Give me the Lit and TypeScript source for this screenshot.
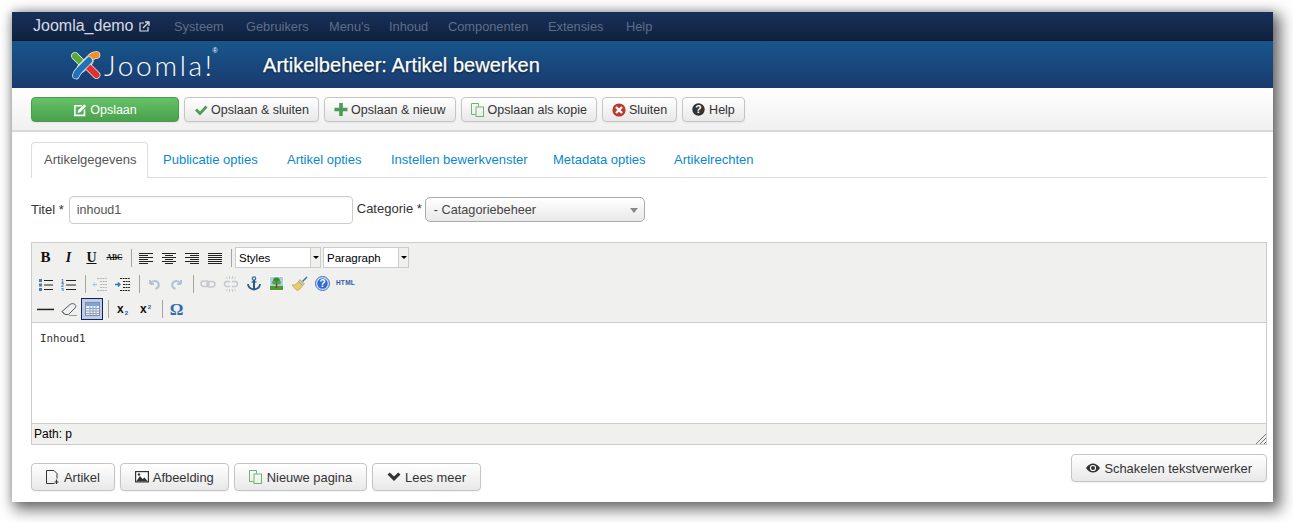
import { LitElement, html, css, svg } from "lit";
import { customElement } from "lit/decorators.js";

const ic = (w: number, h: number, body: unknown) =>
  html`<svg class="ic" width=${w} height=${h} viewBox="0 0 ${w} ${h}">${body}</svg>`;

const icons: Record<string, unknown> = {
  edit: ic(14, 14, svg`<path d="M1 2h8.500L8 3.600H2.700v8h8V7.300L12.300 5.700V13.200H1z" fill="#fff"/><path d="M5.200 7.300L11.200 1.300l2 2-6 6-2.600.6z" fill="#fff"/>`),
  check: ic(14, 14, svg`<path d="M1 7.500l2-2 3 3 5.500-6 2 2L6 12.500z" fill="#4c9b58"/>`),
  plus: ic(14, 13, svg`<path d="M5.200 0h3.600v4.700H13.500v3.600H8.800V13H5.200V8.300H.5V4.700h4.700z" fill="#4c9b58"/>`),
  copy: ic(14, 14, svg`<path d="M.5.500h7v3M4.500 11.500h-4V.5" fill="none" stroke="#6cb56c"/><rect x="5" y="4" width="7.500" height="9.500" fill="none" stroke="#6cb56c"/>`),
  close: ic(14, 14, svg`<circle cx="7" cy="7" r="6.600" fill="#bd362f"/><path d="M4 4l6 6M10 4l-6 6" stroke="#fff" stroke-width="2.400"/>`),
  help: ic(14, 13, svg`<circle cx="6.500" cy="6.500" r="6.200" fill="#333"/><text x="6.500" y="10.200" font-family="Liberation Sans" font-weight="700" font-size="10.500" text-anchor="middle" fill="#fff">?</text>`),
  file: ic(14, 15, svg`<path d="M8.500 13.500H.5V.5H8l3 3V8.500" fill="none" stroke="#333"/><path d="M10.500 9.500v4.500M8.500 12h4" stroke="#333" stroke-width="1.200"/>`),
  picture: ic(14, 12, svg`<path d="M0 0h14v11.500H0z" fill="#333"/><path d="M1.200 1.200h11.600v9H1.200z" fill="#fff"/><path d="M1.500 10l3.500-5 2.500 3 2-1.500 3 3.500z" fill="#333"/><circle cx="4" cy="3.500" r="1.200" fill="#333"/>`),
  chevron: ic(14, 10, svg`<path d="M.5 2.600L2.800.4l4.200 4 4.200-4 2.300 2.200L7 9z" fill="#333"/>`),
  eye: ic(14, 10, svg`<path d="M0 5c2-3 4.500-4.600 7-4.600S12 2 14 5c-2 3-4.500 4.600-7 4.600S2 8 0 5z" fill="#333"/><circle cx="7" cy="5" r="3.100" fill="#fff"/><circle cx="7" cy="5" r="2" fill="#333"/>`),
  ext: ic(11, 11, svg`<path d="M5 2H1v8h8V6" fill="none" stroke="#d5dbe4" stroke-width="1.200"/><path d="M4 7l5.500-5.500M6 1h4v4" fill="none" stroke="#d5dbe4" stroke-width="1.300"/>`),
};

const lines = (rows: [number, number][]) =>
  rows.map(([a, b], i) => svg`<rect x=${a} y=${2 + i * 2} width=${b - a} height="1" fill="#222"/>`);

const mce: Record<string, unknown> = {
  bold: html`<span class="glyph b">B</span>`,
  italic: html`<span class="glyph i">I</span>`,
  under: html`<span class="glyph u">U</span>`,
  strike: html`<span class="glyph s">ABC</span>`,
  left: ic(14, 14, lines([[0, 14], [0, 9], [0, 14], [0, 9], [0, 14], [0, 9]])),
  center: ic(14, 14, lines([[0, 14], [3, 11], [0, 14], [3, 11], [0, 14], [3, 11]])),
  right: ic(14, 14, lines([[0, 14], [5, 14], [0, 14], [5, 14], [0, 14], [5, 14]])),
  justify: ic(14, 14, lines([[0, 14], [0, 14], [0, 14], [0, 14], [0, 14], [0, 14]])),
  ul: ic(14, 14, svg`<rect x="0" y="2" width="3" height="3" fill="#4c78b5"/><rect x="0" y="6.500" width="3" height="3" fill="#4c78b5"/><rect x="0" y="11" width="3" height="3" fill="#4c78b5"/><path d="M5 3.500h9M5 8h9M5 12.500h9" stroke="#222"/>`),
  ol: ic(15, 14, svg`<text x="0" y="5.500" class="num">1</text><text x="0" y="10" class="num">2</text><text x="0" y="14.500" class="num">3</text><path d="M5 3.500h10M5 8h10M5 12.500h10" stroke="#222"/>`),
  outdent: ic(15, 14, svg`<path d="M5 1.500h10M8 4.500h7M8 7.500h7M8 10.500h7M5 13.500h10" stroke="#b4b8bc" stroke-dasharray="2 .6"/><path d="M5 7.500L1.500 7.500M3 5.500l-2 2 2 2" stroke="#9cc0e0" fill="none"/>`),
  indent: ic(15, 14, svg`<path d="M5 1.500h10M8 4.500h7M8 7.500h7M8 10.500h7M5 13.500h10" stroke="#222" stroke-dasharray="2 .6"/><path d="M0 7.500h4M3 5.500l2 2-2 2" stroke="#2d73b9" fill="none" stroke-width="1.300"/>`),
  undo: ic(14, 14, svg`<path d="M3 7V3M3 7h4M3.300 6.700C5 3.500 10 3 11.500 6.500c.8 2.300-.5 4.500-3 5.500" fill="none" stroke="#b3c2d6" stroke-width="2"/>`),
  redo: ic(14, 14, svg`<path d="M11 7V3M11 7H7M10.700 6.700C9 3.500 4 3 2.500 6.500c-.8 2.300.5 4.500 3 5.500" fill="none" stroke="#b3c2d6" stroke-width="2"/>`),
  link: ic(16, 10, svg`<rect x="1" y="2" width="8" height="5.500" rx="2.700" fill="none" stroke="#c4c9ce" stroke-width="1.500"/><rect x="7" y="2.500" width="8" height="5.500" rx="2.700" fill="none" stroke="#c4c9ce" stroke-width="1.500"/>`),
  unlink: ic(16, 16, svg`<path d="M7 5.500H4a2.500 2.500 0 0 0 0 5h3M9 5.500h3a2.500 2.500 0 0 1 0 5H9" fill="none" stroke="#c4c9ce" stroke-width="1.500"/><path d="M6 0l1 3M10 0L9 3M3 1l2 2M13 1l-2 2M6 16l1-3M10 16l-1-3M3 15l2-2M13 15l-2-2" stroke="#c4c9ce"/>`),
  anchor: ic(14, 15, svg`<circle cx="7" cy="2.500" r="1.700" fill="none" stroke="#3a6a9a" stroke-width="1.200"/><path d="M7 4v9" stroke="#2c5a8c" stroke-width="2"/><path d="M4.500 6h5" stroke="#2c5a8c" stroke-width="1.300"/><path d="M1 8c0 3.500 3 5 6 5.500 3-.5 6-2 6-5.500" fill="none" stroke="#2c5a8c" stroke-width="1.800"/>`),
  image: ic(15, 15, svg`<rect width="15" height="15" fill="#fff"/><rect x="1" y="1" width="13" height="9" fill="#a9cdea"/><rect x="1" y="10" width="13" height="4" fill="#4f9a2d"/><circle cx="7.500" cy="5" r="3.400" fill="#3e8a32"/><circle cx="5" cy="6.500" r="1.900" fill="#58a53a"/><circle cx="10" cy="6.500" r="1.900" fill="#58a53a"/><rect x="6.800" y="8" width="1.500" height="4" fill="#7a4a1e"/>`),
  clean: ic(16, 15, svg`<path d="M10 5L14.500 .5l1 1L11 6z" fill="#3e6dab"/><path d="M8 3.500l4.500 4.500-2 1.500L6.500 5.500z" fill="#c9c2a8" stroke="#8f8a70" stroke-width=".5"/><path d="M6.500 5.500l4 4c-1 2.500-3 4.500-5.500 5C3 13 1 10.500 0 9c2.500 0 5-1 6.500-3.500z" fill="#e9c96a" stroke="#a88f3c" stroke-width=".5"/>`),
  qhelp: ic(15, 15, svg`<circle cx="7.500" cy="7.500" r="7" fill="#cfe0f5" stroke="#3d6fc0"/><circle cx="7.500" cy="7.500" r="5.200" fill="#2f6bd0"/><text x="7.500" y="11" text-anchor="middle" font-family="Liberation Sans" font-weight="700" font-size="10" fill="#fff">?</text>`),
  htmlx: html`<span class="glyph h">HTML</span>`,
  hr: ic(17, 3, svg`<rect width="17" height="1.500" y=".7" fill="#222"/>`),
  eraser: ic(16, 14, svg`<path d="M1 9.500L9 2.500c1.500-1.200 3.500-1.200 5 0 1.200 1.200 1 2.500 0 3.500l-6.500 6.500H4z" fill="#eef1f4" stroke="#555"/><path d="M1 9.500l3 3" stroke="#555"/><path d="M8 13.500h8" stroke="#999"/>`),
  table: ic(15, 14, svg`<rect x=".5" y=".5" width="14" height="13" fill="#eef3fb" stroke="#7d8fb0"/><rect x="1" y="1" width="13" height="3" fill="#7fa4d8"/><path d="M1 6.500h13M1 9h13M1 11.500h13M5 4v9M8 4v9M11 4v9" stroke="#8ea3c3"/>`),
  sub: html`<span class="glyph x">x<small class="d">2</small></span>`,
  sup: html`<span class="glyph x">x<small class="p">2</small></span>`,
  omega: html`<span class="glyph om">Ω</span>`,
};

const limbs: [string, string][] = [
  ["M5 7L15 17l4.500-4.500", "#5aa83a"],
  ["M26.500 6c-2 0-3.500.5-5 2L11 18.500", "#ef8f2f"],
  ["M26.500 26L16 15.500 12 19.500", "#e0312e"],
  ["M6 26.500c1-3 2-4 3.500-5.500L19 11.500", "#1f73b8"],
];

const navItems: [string, number][] = [
  ["Systeem", 72], ["Gebruikers", 83], ["Menu's", 60], ["Inhoud", 59],
  ["Componenten", 100], ["Extensies", 78], ["Help", 40],
];
const tabItems: [string, number][] = [
  ["Publicatie opties", 124], ["Artikel opties", 104], ["Instellen bewerkvenster", 162],
  ["Metadata opties", 121], ["Artikelrechten", 90],
];

@customElement("app-root")
export class AppRoot extends LitElement {
  static styles = css`
    :host {
      display: block;
      width: 1293px;
      height: 522px;
      box-sizing: border-box;
      padding: 12px 20px 20px 12px;
      background: #fff;
      font-family: "Liberation Sans", Arial, sans-serif;
      font-size: 13px;
      color: #333;
      overflow: hidden;
    }
    * { box-sizing: border-box; }
    .ic { display: block; flex: none; }
    .window {
      height: 490px;
      background: #fff;
      box-shadow: 5px 5px 14px 3px rgba(0, 0, 0, 0.55), 0 0 8px rgba(0, 0, 0, 0.18);
      display: flex;
      flex-direction: column;
    }
    .nav {
      height: 29px;
      flex: none;
      background: linear-gradient(#17305a, #11223f);
      border-bottom: 1px solid #0a1a33;
      display: flex;
      align-items: center;
      padding-left: 21px;
    }
    .brand {
      display: flex;
      align-items: center;
      gap: 5px;
      color: #d5dbe4;
      font-size: 16px;
      width: 141px;
      flex: none;
    }
    .nav .item { font-size: 12.8px; color: #5e6e85; flex: none; white-space: nowrap; }
    .head {
      height: 47px;
      flex: none;
      background: linear-gradient(#17568c, #1a3a6e);
      display: flex;
      align-items: center;
      padding-left: 58px;
      color: #fff;
    }
    .logo { display: flex; align-items: center; width: 193px; flex: none; }
    .wordmark {
      font-family: Lato, sans-serif;
      font-weight: 300;
      font-size: 28px;
      margin-left: 2px;
      letter-spacing: 2.700px;
      line-height: 1;
      margin-top: 1px;
    }
    .reg { font-size: 7px; align-self: flex-start; margin: -2px 0 0 -2px; line-height: 1; }
    h1 {
      margin: 2px 0 0;
      font-size: 20px;
      font-weight: 400;
      letter-spacing: .04px;
      -webkit-text-stroke: .25px #fff;
      text-shadow: 0 1px 2px rgba(0, 0, 0, .8);
    }
    .tools {
      height: 44px;
      flex: none;
      background: linear-gradient(#fff, #f0f0f0);
      border-bottom: 2px solid #d9d9d9;
      display: flex;
      align-items: flex-start;
      gap: 5px;
      padding: 9px 0 0 19px;
    }
    .btn {
      height: 25px;
      display: inline-flex;
      align-items: center;
      justify-content: center;
      gap: 3px;
      padding: 0 9px;
      border: 1px solid #c5c5c5;
      border-radius: 4px;
      background: linear-gradient(#fff, #e8e8e8);
      color: #333;
      font-size: 12.5px;
      white-space: nowrap;
      box-shadow: 0 1px 2px rgba(0, 0, 0, .06);
    }
    .btn.save {
      width: 148px;
      background: linear-gradient(#66c267, #4aa14d);
      border-color: #4b9a4e;
      color: #fff;
    }
    .body { flex: 1; padding: 10px 6px 0 19px; min-height: 0; display: flex; flex-direction: column; }
    .tabs {
      height: 36px;
      flex: none;
      display: flex;
      border-bottom: 1px solid #ddd;
    }
    .tab {
      color: #0988d0;
      line-height: 36px;
      font-size: 13px;
      white-space: nowrap;
      flex: none;
    }
    .tab.on {
      height: 36px;
      width: 117px;
      padding-left: 12px;
      margin-right: 15px;
      color: #555;
      background: #fff;
      border: 1px solid #ddd;
      border-bottom: 0;
      border-radius: 4px 4px 0 0;
      line-height: 34px;
    }
    .fields {
      display: flex;
      align-items: flex-start;
      margin-top: 18px;
      height: 28px;
      flex: none;
      font-size: 13px;
    }
    .lbl { line-height: 27px; }
    .input {
      width: 284px;
      height: 28px;
      margin: 0 4px 0 5px;
      border: 1px solid #ccc;
      border-radius: 4px;
      padding: 0 7px;
      line-height: 26px;
      color: #555;
      font-size: 12.5px;
      box-shadow: inset 0 1px 1px rgba(0, 0, 0, .04);
    }
    .lbl.cat { line-height: 25px; }
    .select {
      width: 220px;
      height: 25px;
      margin-left: 3px;
      margin-top: 1px;
      border: 1px solid #aaa;
      border-radius: 5px;
      background: linear-gradient(#fff, #e9e9e9);
      display: flex;
      align-items: center;
      justify-content: space-between;
      padding: 1px 5px 0 8px;
      font-size: 12.7px;
      color: #444;
    }
    .caret { width: 0; height: 0; border: 4.5px solid transparent; border-top: 5px solid #888; border-bottom: 0; margin-right: 1px; }
    .editor {
      margin-top: 18px;
      height: 203px;
      flex: none;
      border: 1px solid #ccc;
      display: flex;
      flex-direction: column;
    }
    .mtool {
      height: 80px;
      flex: none;
      background: #f0f0ee;
      border-bottom: 1px solid #ccc;
      padding: 2px 0 0 2px;
      display: flex;
      flex-direction: column;
    }
    .mrow { height: 26px; display: flex; align-items: center; }
    .cell { width: 23px; height: 24px; display: flex; align-items: center; justify-content: center; flex: none; }
    .cell.active { background: #c2cbe0; border: 1px solid #0a246a; width: 22px; height: 22px; margin-left: 1px; }
    .sep { width: 1px; height: 18px; background: #a4a4a4; margin: 0 2px 0 5px; flex: none; }
    .sep.last { margin-right: 3px; }
    .mce-select { display: flex; height: 21px; width: 86px; border: 1px solid #ccc; background: #fff; margin-right: 2px; align-items: center; font-size: 11.5px; color: #000; padding-left: 3px; flex: none; justify-content: space-between; }
    .mce-arrow { width: 10px; align-self: stretch; background: #f0f0ee; border-left: 1px solid #ccc; display: flex; align-items: center; justify-content: center; }
    .mce-arrow i { display: block; width: 0; height: 0; border: 3px solid transparent; border-top: 3px solid #000; border-bottom: 0; }
    .glyph { color: #111; line-height: 1; }
    .glyph.b { font-family: "Liberation Serif", serif; font-weight: 700; font-size: 15px; }
    .glyph.i { font-family: "Liberation Serif", serif; font-weight: 700; font-style: italic; font-size: 14px; }
    .glyph.u { font-family: "Liberation Serif", serif; font-weight: 700; font-size: 14px; text-decoration: underline; }
    .glyph.s { font-family: "Liberation Serif", serif; font-size: 7.500px; font-weight: 700; text-decoration: line-through; }
    .glyph.h { font-family: "Liberation Sans", sans-serif; font-size: 6.500px; font-weight: 700; color: #2d5a9e; letter-spacing: .3px; }
    .glyph.x { font-family: "Liberation Sans", sans-serif; font-weight: 700; font-size: 12px; display: flex; }
    .glyph.x small { font-size: 6px; color: #2d5a9e; }
    small.d { align-self: flex-end; margin-bottom: -1px; margin-left: 1px; }
    small.p { align-self: flex-start; margin-top: 1px; margin-left: 1px; }
    .glyph.om { font-family: "Liberation Serif", serif; font-weight: 700; font-size: 17px; color: #2d6bb5; }
    .num { font-size: 5px; font-weight: 700; fill: #2d6bb5; font-family: "Liberation Sans", sans-serif; }
    .content {
      height: 100px;
      flex: none;
      padding: 9px 8px;
      font-family: "DejaVu Sans Mono", monospace;
      font-size: 10.800px;
      color: #333;
      background: #fff;
    }
    .status {
      flex: 1;
      background: #f0f0ee;
      border-top: 1px solid #ccc;
      font-size: 12px;
      color: #000;
      padding: 0 0 0 2px;
      display: flex;
      align-items: center;
      justify-content: space-between;
    }
    .status svg { align-self: flex-end; }
    .foot { display: flex; justify-content: space-between; align-items: flex-start; margin-top: 9px; }
    .fbtns { display: flex; gap: 5px; margin-top: 9px; }
    .foot .btn { height: 28px; padding: 0 14px; font-size: 12.9px; gap: 4px; }
  `;

  render() {
    const m = (k: string, active = false) =>
      html`<div class="cell ${active ? "active" : ""}">${mce[k]}</div>`;
    const sep = html`<div class="sep"></div>`;
    return html`<div class="window">
      <div class="nav">
        <div class="brand">Joomla_demo ${icons.ext}</div>
        ${navItems.map(([t, w]) => html`<span class="item" style="width:${w}px">${t}</span>`)}
      </div>
      <div class="head">
        <div class="logo">
          <svg width="32" height="32" viewBox="0 0 32 32">
            <g fill="none" stroke-linecap="round" stroke-linejoin="round">
              ${limbs.map(
                ([d, c]) => svg`<path d=${d} stroke="#fff" stroke-width="7.600"/><path d=${d} stroke=${c} stroke-width="6.400"/>`
              )}
            </g>
          </svg>
          <span class="wordmark">Joomla!</span><span class="reg">®</span>
        </div>
        <h1>Artikelbeheer: Artikel bewerken</h1>
      </div>
      <div class="tools">
        <div class="btn save">${icons.edit}<span>Opslaan</span></div>
        <div class="btn">${icons.check}<span>Opslaan &amp; sluiten</span></div>
        <div class="btn">${icons.plus}<span>Opslaan &amp; nieuw</span></div>
        <div class="btn">${icons.copy}<span>Opslaan als kopie</span></div>
        <div class="btn">${icons.close}<span>Sluiten</span></div>
        <div class="btn">${icons.help}<span>Help</span></div>
      </div>
      <div class="body">
        <div class="tabs">
          <div class="tab on">Artikelgegevens</div>
          ${tabItems.map(([t, w]) => html`<div class="tab" style="width:${w}px">${t}</div>`)}
        </div>
        <div class="fields">
          <span class="lbl">Titel *</span>
          <div class="input">inhoud1</div>
          <span class="lbl cat">Categorie *</span>
          <div class="select"><span>- Catagoriebeheer</span><i class="caret"></i></div>
        </div>
        <div class="editor">
          <div class="mtool">
            <div class="mrow">
              ${m("bold")}${m("italic")}${m("under")}${m("strike")}${sep}${m("left")}${m("center")}${m("right")}${m("justify")}<div class="sep last"></div>
              <div class="mce-select"><span>Styles</span><span class="mce-arrow"><i></i></span></div>
              <div class="mce-select"><span>Paragraph</span><span class="mce-arrow"><i></i></span></div>
            </div>
            <div class="mrow">
              ${m("ul")}${m("ol")}${sep}${m("outdent")}${m("indent")}${sep}${m("undo")}${m("redo")}${sep}${m("link")}${m("unlink")}${m("anchor")}${m("image")}${m("clean")}${m("qhelp")}${m("htmlx")}
            </div>
            <div class="mrow">
              ${m("hr")}${m("eraser")}${m("table", true)}${sep}${m("sub")}${m("sup")}${sep}${m("omega")}
            </div>
          </div>
          <div class="content">Inhoud1</div>
          <div class="status">
            <span>Path: p</span>
            <svg width="11" height="11" viewBox="0 0 11 11"><path d="M1 11L11 1M5 11l6-6M9 11l2-2" stroke="#777" stroke-width="1"/></svg>
          </div>
        </div>
        <div class="foot">
          <div class="fbtns">
            <div class="btn">${icons.file}<span>Artikel</span></div>
            <div class="btn">${icons.picture}<span>Afbeelding</span></div>
            <div class="btn">${icons.copy}<span>Nieuwe pagina</span></div>
            <div class="btn">${icons.chevron}<span>Lees meer</span></div>
          </div>
          <div class="btn">${icons.eye}<span>Schakelen tekstverwerker</span></div>
        </div>
      </div>
    </div>`;
  }
}
